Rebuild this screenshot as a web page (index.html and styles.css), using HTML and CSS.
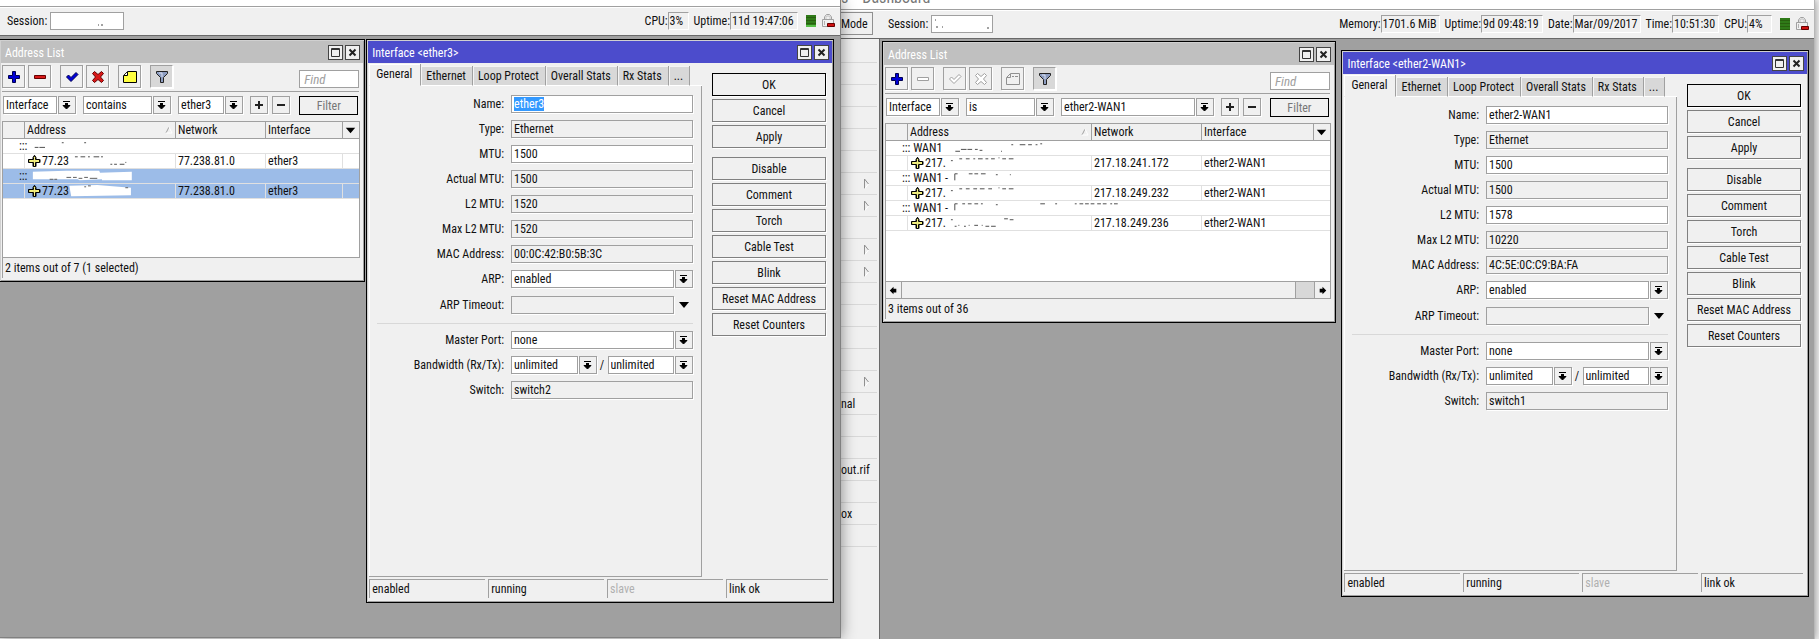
FILE: index.html
```html
<!DOCTYPE html>
<html lang="en">
<head>
<meta charset="utf-8">
<title>WinBox</title>
<link rel="stylesheet" href="styles.css">
</head>
<body>
<svg class="defs" aria-hidden="true">
  <symbol id="drop" viewBox="0 0 16 16"><path d="M4 4.500h7M4 8.500h7L7.500 12z" stroke="#000"/><path d="M6 6h3v3H6z"/></symbol>
  <symbol id="caret" viewBox="0 0 16 16"><path d="M3 5h10L8 11z"/></symbol>
  <symbol id="plus" viewBox="0 0 16 16"><path d="M6.500 2.500h3v4h4v3h-4v4h-3v-4h-4v-3h4z" fill="#0000d8" stroke="#000050"/></symbol>
  <symbol id="minus" viewBox="0 0 16 16"><path d="M2.500 6.500h11v3h-11z" fill="#d81818" stroke="#600"/></symbol>
  <symbol id="check" viewBox="0 0 16 16"><path d="M2.500 8l2-2L7 8.500l5-5 2 2L7 12.500z" fill="#0000d8" stroke="#000050"/></symbol>
  <symbol id="cross" viewBox="0 0 16 16"><path d="M2.500 4.500l2-2L8 5.500l3.500-3 2 2L10.500 8l3 3.500-2 2L8 10.500l-3.500 3-2-2L5.500 8z" fill="#d81818" stroke="#600"/></symbol>
  <symbol id="note" viewBox="0 0 16 16"><path d="M1.500 13.500v-7l4-4h9v11z" fill="#ffff40" stroke="#000"/><path d="M2 6.500h3.500V3" fill="#fff" stroke="#000"/></symbol>
  <symbol id="minus-off" viewBox="0 0 16 16"><path d="M2.500 6.500h11v3h-11z" fill="#fff" stroke="#a0a0a0"/></symbol>
  <symbol id="check-off" viewBox="0 0 16 16"><path d="M2.500 8l2-2L7 8.500l5-5 2 2L7 12.500z" fill="#fff" stroke="#a0a0a0"/></symbol>
  <symbol id="cross-off" viewBox="0 0 16 16"><path d="M2.500 4.500l2-2L8 5.500l3.500-3 2 2L10.500 8l3 3.500-2 2L8 10.500l-3.500 3-2-2L5.500 8z" fill="#fff" stroke="#a0a0a0"/></symbol>
  <symbol id="note-off" viewBox="0 0 16 16"><path d="M1.500 13.500v-7l4-4h9v11zM2 6.500h3.500V3M7 5.500h2M10 5.500h3" fill="none" stroke="#909090"/></symbol>
  <symbol id="funnel" viewBox="0 0 16 16"><path d="M2.500 2.500h11v2L9.500 8.500v5h-3v-5l-4-4z" fill="#8c9cc0" stroke="#222"/><path d="M5 4h3v4" fill="none" stroke="#dde4f4"/></symbol>
  <symbol id="add" viewBox="0 0 16 16"><path d="M7 4h2v3h3v2H9v3H7V9H4V7h3z" fill="#222"/></symbol>
  <symbol id="sub" viewBox="0 0 16 16"><path d="M4 7h8v2H4z" fill="#222"/></symbol>
  <symbol id="max" viewBox="0 0 13 13"><path d="M2.500 2.500h8v8h-8zM2 3.500h9" fill="none" stroke="#333"/></symbol>
  <symbol id="close" viewBox="0 0 13 13"><path d="M3.500 3.500l6 6M9.500 3.500l-6 6" stroke="#222" stroke-width="2"/></symbol>
  <symbol id="sort" viewBox="0 0 8 8"><path d="M1 7L4 1" stroke="#a0a0a0"/><path d="M4 1L7 7H1" fill="none" stroke="#fff"/></symbol>
  <symbol id="address" viewBox="0 0 13 12"><path d="M4.500 11.500v-4h-4v-3h4v-2l1.500-2h1l1.500 2v2h4v3h-4v4z" fill="#000"/><path d="M5.500 10.500v-4h-4v-1h4v-3l1-1 1 1v3h4v1h-4v4z" fill="#f4f080" stroke="#f4f080"/><path d="M5.500 11.500v-4h-5v-3h5v-2l1-2 1 2v2h4v3h-4v4z" fill="none" stroke="#000"/></symbol>
  <symbol id="left" viewBox="0 0 16 16"><path d="M4 8l4-4v2h3v4H8v2z"/></symbol>
  <symbol id="right" viewBox="0 0 16 16"><path d="M12 8L8 4v2H5v4h3v2z"/></symbol>
  <symbol id="expand" viewBox="0 0 7 12"><path d="M1.500 11V1l4 5" fill="none" stroke="#909090"/><path d="M5.500 6l-4 5" stroke="#fff"/></symbol>
  <symbol id="lock" viewBox="0 0 14 15"><path d="M3.500 7V4l2-2.500h3l2 2.500v3M1.500 6.500h11v7h-11z" fill="none" stroke="#a0a0a0"/><path d="M5 6V4.500L6 3h2l1 1.500V6" fill="none" stroke="#c4c4c4"/><path d="M3 9h1M3 11h1" stroke="#777"/><path d="M6.500 10.500h7v3h-7z" fill="#d01010" stroke="#600"/></symbol>
</svg>

<main class="desktop">
  <section class="app app-front" aria-label="First router">
    <header class="caption"></header>
    <div class="session-bar">
      <label for="s1">Session:</label>
      <span class="session wide"><input id="s1"><svg viewBox="0 0 74 18"><path d="M48 13h1M51 13h2" stroke="#444"/></svg></span>
      <div class="stats">
        <span class="stat">CPU:<output class="w-s">3%</output></span>
        <span class="stat">Uptime:<output class="w-l">11d 19:47:06</output></span>
        <i class="meter light"></i>
        <svg class="lock"><use href="#lock"/></svg>
      </div>
    </div>
    <div class="mdi">
      <section class="window list-a">
        <h2 class="title idle">Address List<span class="title-buttons"><button aria-label="Maximize"><svg><use href="#max"/></svg></button><button aria-label="Close"><svg><use href="#close"/></svg></button></span></h2>
        <div class="tools">
          <div class="group"><button class="tool" aria-label="Add"><svg><use href="#plus"/></svg></button><button class="tool" aria-label="Remove"><svg><use href="#minus"/></svg></button></div>
          <div class="group"><button class="tool" aria-label="Enable"><svg><use href="#check"/></svg></button><button class="tool" aria-label="Disable"><svg><use href="#cross"/></svg></button></div>
          <button class="tool" aria-label="Comment"><svg><use href="#note"/></svg></button>
          <button class="tool pressed" aria-label="Filter"><svg><use href="#funnel"/></svg></button>
          <input class="find" placeholder="Find" aria-label="Find">
        </div>
        <div class="filters">
          <div class="combo f-field"><select aria-label="Field"><option>Interface</option></select><button class="drop" aria-label="Open"><svg><use href="#drop"/></svg></button></div>
          <div class="combo f-op"><select aria-label="Operator"><option>contains</option></select><button class="drop" aria-label="Open"><svg><use href="#drop"/></svg></button></div>
          <div class="combo f-value"><select aria-label="Value"><option>ether3</option></select><button class="drop" aria-label="Open"><svg><use href="#drop"/></svg></button></div>
          <div class="pair"><button class="drop" aria-label="Add condition"><svg><use href="#add"/></svg></button><button class="drop" aria-label="Remove condition"><svg><use href="#sub"/></svg></button></div>
          <button class="apply-filter">Filter</button>
        </div>
        <div class="grid-box">
          <table>
            <colgroup><col class="c-flag"><col class="c-addr"><col class="c-net"><col><col class="c-menu"></colgroup>
            <thead><tr><th></th><th><span class="sorted">Address<svg><use href="#sort"/></svg></span></th><th>Network</th><th>Interface</th><th class="menu"><svg><use href="#caret"/></svg></th></tr></thead>
            <tbody>
              <tr class="note"><td colspan="5">:::<svg class="smudge" viewBox="0 0 120 15"><path d="M4 9h4M9 9h6M33 4h2M57 4h2" stroke="#444"/></svg></td></tr>
              <tr><td></td><td><svg class="pin"><use href="#address"/></svg>77.23<svg class="smudge over" viewBox="0 0 100 15"><path d="M0 5q20 -5 60 0v9H2z" fill="#fff"/><path d="M6 3h3M12 3h5M20 3h2M26 3h6M34 3h2M44 11h2M48 11h3M54 11h5M60 9h1" stroke="#444"/></svg></td><td>77.238.81.0</td><td>ether3</td><td></td></tr>
              <tr class="note selected"><td colspan="5">:::<svg class="smudge" viewBox="0 0 120 15"><path d="M2 3l36-1 35 0 1 2 34-1v9H76v-1l-24 1-2-1H2z" fill="#fff"/><path d="M20 11h4M25 11h3M38 9h5M45 9h4M51 10h4M57 9h4M63 10h8" stroke="#555"/></svg></td></tr>
              <tr class="selected"><td></td><td><svg class="pin"><use href="#address"/></svg>77.23<svg class="smudge over" viewBox="0 0 100 15"><path d="M0 2l30-1 36 3v8L2 13z" fill="#fff"/><path d="M16 3h2M20 2h3M60 4h3" stroke="#555"/></svg></td><td>77.238.81.0</td><td>ether3</td><td></td></tr>
            </tbody>
          </table>
        </div>
        <p class="count">2 items out of 7 (1 selected)</p>
      </section>

      <section class="window dialog-a">
        <h2 class="title">Interface &lt;ether3&gt;<span class="title-buttons"><button aria-label="Maximize"><svg><use href="#max"/></svg></button><button aria-label="Close"><svg><use href="#close"/></svg></button></span></h2>
        <div class="dialog-body">
          <div class="sheet">
            <nav class="tabs"><button class="current">General</button><button>Ethernet</button><button>Loop Protect</button><button>Overall Stats</button><button>Rx Stats</button><button>...</button><i></i></nav>
            <form class="panel">
              <label for="a1">Name:</label><input id="a1" class="marked" value="ether3">
              <label for="a2">Type:</label><input id="a2" readonly value="Ethernet">
              <label for="a3">MTU:</label><input id="a3" value="1500">
              <label for="a4">Actual MTU:</label><input id="a4" readonly value="1500">
              <label for="a5">L2 MTU:</label><input id="a5" readonly value="1520">
              <label for="a6">Max L2 MTU:</label><input id="a6" readonly value="1520">
              <label for="a7">MAC Address:</label><input id="a7" readonly value="00:0C:42:B0:5B:3C">
              <label for="a8">ARP:</label><div class="combo"><select id="a8"><option>enabled</option></select><button type="button" class="drop" aria-label="Open"><svg><use href="#drop"/></svg></button></div>
              <label for="a9">ARP Timeout:</label><div class="combo optional"><input id="a9" readonly><button type="button" class="drop bare" aria-label="Expand"><svg><use href="#caret"/></svg></button></div>
              <hr>
              <label for="a10">Master Port:</label><div class="combo"><select id="a10"><option>none</option></select><button type="button" class="drop" aria-label="Open"><svg><use href="#drop"/></svg></button></div>
              <label for="a11">Bandwidth (Rx/Tx):</label><div class="combo"><select id="a11"><option>unlimited</option></select><button type="button" class="drop" aria-label="Open"><svg><use href="#drop"/></svg></button><span class="slash">/</span><select aria-label="Tx"><option>unlimited</option></select><button type="button" class="drop" aria-label="Open"><svg><use href="#drop"/></svg></button></div>
              <label for="a12">Switch:</label><input id="a12" readonly value="switch2">
            </form>
          </div>
          <div class="actions"><button class="default">OK</button><button>Cancel</button><button>Apply</button><button class="spaced">Disable</button><button>Comment</button><button>Torch</button><button>Cable Test</button><button>Blink</button><button>Reset MAC Address</button><button>Reset Counters</button></div>
        </div>
        <footer class="status"><span>enabled</span><span>running</span><span class="off">slave</span><span>link ok</span></footer>
      </section>
    </div>
  </section>

  <section class="app app-back" aria-label="Second router">
    <header class="caption"><span>s</span><span>Dashboard</span></header>
    <div class="session-bar">
      <button class="mode">Mode</button>
      <label for="s2">Session:</label>
      <span class="session"><input id="s2"><svg viewBox="0 0 74 18"><path d="M4 5h1M5 12h2M11 12h1M56 13h2" stroke="#444"/></svg></span>
      <div class="stats">
        <span class="stat">Memory:<output class="w-m">1701.6 MiB</output></span>
        <span class="stat">Uptime:<output class="w-n">9d 09:48:19</output></span>
        <span class="stat">Date:<output class="w-l">Mar/09/2017</output></span>
        <span class="stat">Time:<output class="w-t">10:51:30</output></span>
        <span class="stat">CPU:<output class="w-c">4%</output></span>
        <i class="meter"></i>
        <svg class="lock"><use href="#lock"/></svg>
      </div>
    </div>
    <div class="workspace">
      <ul class="side-menu">
        <li></li><li></li><li></li><li></li><li></li><li></li>
        <li><svg><use href="#expand"/></svg></li><li><svg><use href="#expand"/></svg></li><li></li><li><svg><use href="#expand"/></svg></li><li><svg><use href="#expand"/></svg></li>
        <li></li><li></li><li></li><li></li><li><svg><use href="#expand"/></svg></li>
        <li>nal</li><li></li><li></li><li>out.rif</li><li></li><li>ox</li><li></li>
      </ul>
      <div class="mdi">
        <section class="window list-b">
          <h2 class="title idle">Address List<span class="title-buttons"><button aria-label="Maximize"><svg><use href="#max"/></svg></button><button aria-label="Close"><svg><use href="#close"/></svg></button></span></h2>
          <div class="tools">
            <div class="group"><button class="tool" aria-label="Add"><svg><use href="#plus"/></svg></button><button class="tool" aria-label="Remove" disabled><svg><use href="#minus-off"/></svg></button></div>
            <div class="group"><button class="tool" aria-label="Enable" disabled><svg><use href="#check-off"/></svg></button><button class="tool" aria-label="Disable" disabled><svg><use href="#cross-off"/></svg></button></div>
            <button class="tool" aria-label="Comment" disabled><svg><use href="#note-off"/></svg></button>
            <button class="tool pressed" aria-label="Filter"><svg><use href="#funnel"/></svg></button>
            <input class="find" placeholder="Find" aria-label="Find">
          </div>
          <div class="filters">
            <div class="combo f-field"><select aria-label="Field"><option>Interface</option></select><button class="drop" aria-label="Open"><svg><use href="#drop"/></svg></button></div>
            <div class="combo f-op"><select aria-label="Operator"><option>is</option></select><button class="drop" aria-label="Open"><svg><use href="#drop"/></svg></button></div>
            <div class="combo f-value"><select aria-label="Value"><option>ether2-WAN1</option></select><button class="drop" aria-label="Open"><svg><use href="#drop"/></svg></button></div>
            <div class="pair"><button class="drop" aria-label="Add condition"><svg><use href="#add"/></svg></button><button class="drop" aria-label="Remove condition"><svg><use href="#sub"/></svg></button></div>
            <button class="apply-filter">Filter</button>
          </div>
          <div class="grid-box">
            <table>
              <colgroup><col class="c-flag"><col class="c-addr-w"><col class="c-net-w"><col><col class="c-menu"></colgroup>
              <thead><tr><th></th><th><span class="sorted">Address<svg><use href="#sort"/></svg></span></th><th>Network</th><th>Interface</th><th class="menu"><svg><use href="#caret"/></svg></th></tr></thead>
              <tbody>
                <tr class="note"><td colspan="5">::: WAN1<svg class="smudge" viewBox="0 0 120 15"><path d="M10 11h5M16 9h6M23 9h5M31 9h3M36 10h3M59 11h1M70 4h2M79 4h6M88 4h4M96 4h2M101 3h2" stroke="#444"/></svg></td></tr>
                <tr><td></td><td><svg class="pin"><use href="#address"/></svg>217.<svg class="smudge" viewBox="0 0 120 15"><path d="M1 5h2M10 3h3M17 3h4M25 3h2M30 3h5M38 3h3M44 3h4M52 2h1M56 3h4M63 3h5" stroke="#444"/></svg></td><td>217.18.241.172</td><td colspan="2">ether2-WAN1</td></tr>
                <tr class="note"><td colspan="5">::: WAN1 -<svg class="smudge" viewBox="0 0 120 15"><path d="M3 10V3h3M18 3h4M24 3h4M31 3h5M47 4h2M62 4h1" fill="none" stroke="#444"/></svg></td></tr>
                <tr><td></td><td><svg class="pin"><use href="#address"/></svg>217.<svg class="smudge" viewBox="0 0 120 15"><path d="M1 5h2M10 3h3M17 3h4M25 3h4M32 3h5M41 3h4M52 2h1M56 3h4M63 3h5" stroke="#444"/></svg></td><td>217.18.249.232</td><td colspan="2">ether2-WAN1</td></tr>
                <tr class="note"><td colspan="5">::: WAN1 -<svg class="smudge" viewBox="0 0 120 15"><path d="M3 10V3h3" fill="none" stroke="#444"/><path d="M11 3h3M17 3h4M24 3h4M31 3h2M47 4h2" stroke="#444"/></svg><svg class="smudge" viewBox="0 0 120 15"><path d="M-36 0" /><path d="M-34 3h5M-18 3h2M3 3h2M8 3h4M14 3h4M20 3h4M27 3h4M33 3h4M41 3h2M45 3h4" transform="translate(0 0)" stroke="#444"/></svg></td></tr>
                <tr><td></td><td><svg class="pin"><use href="#address"/></svg>217.<svg class="smudge" viewBox="0 0 120 15"><path d="M1 4h2M5 11h2M9 10h1M15 11h2M20 10h1M26 10h4M34 10h1M38 11h4M44 11h5M58 3h4M64 4h4" stroke="#444"/></svg></td><td>217.18.249.236</td><td colspan="2">ether2-WAN1</td></tr>
              </tbody>
            </table>
            <div class="scroll"><button aria-label="Scroll left"><svg><use href="#left"/></svg></button><i class="thumb"></i><i class="track"></i><button aria-label="Scroll right"><svg><use href="#right"/></svg></button></div>
          </div>
          <p class="count">3 items out of 36</p>
        </section>

        <section class="window dialog-b">
          <h2 class="title">Interface &lt;ether2-WAN1&gt;<span class="title-buttons"><button aria-label="Maximize"><svg><use href="#max"/></svg></button><button aria-label="Close"><svg><use href="#close"/></svg></button></span></h2>
          <div class="dialog-body">
            <div class="sheet">
              <nav class="tabs"><button class="current">General</button><button>Ethernet</button><button>Loop Protect</button><button>Overall Stats</button><button>Rx Stats</button><button>...</button><i></i></nav>
              <form class="panel">
                <label for="b1">Name:</label><input id="b1" value="ether2-WAN1">
                <label for="b2">Type:</label><input id="b2" readonly value="Ethernet">
                <label for="b3">MTU:</label><input id="b3" value="1500">
                <label for="b4">Actual MTU:</label><input id="b4" readonly value="1500">
                <label for="b5">L2 MTU:</label><input id="b5" value="1578">
                <label for="b6">Max L2 MTU:</label><input id="b6" readonly value="10220">
                <label for="b7">MAC Address:</label><input id="b7" readonly value="4C:5E:0C:C9:BA:FA">
                <label for="b8">ARP:</label><div class="combo"><select id="b8"><option>enabled</option></select><button type="button" class="drop" aria-label="Open"><svg><use href="#drop"/></svg></button></div>
                <label for="b9">ARP Timeout:</label><div class="combo optional"><input id="b9" readonly><button type="button" class="drop bare" aria-label="Expand"><svg><use href="#caret"/></svg></button></div>
                <hr>
                <label for="b10">Master Port:</label><div class="combo"><select id="b10"><option>none</option></select><button type="button" class="drop" aria-label="Open"><svg><use href="#drop"/></svg></button></div>
                <label for="b11">Bandwidth (Rx/Tx):</label><div class="combo"><select id="b11"><option>unlimited</option></select><button type="button" class="drop" aria-label="Open"><svg><use href="#drop"/></svg></button><span class="slash">/</span><select aria-label="Tx"><option>unlimited</option></select><button type="button" class="drop" aria-label="Open"><svg><use href="#drop"/></svg></button></div>
                <label for="b12">Switch:</label><input id="b12" readonly value="switch1">
              </form>
            </div>
            <div class="actions"><button class="default">OK</button><button>Cancel</button><button>Apply</button><button class="spaced">Disable</button><button>Comment</button><button>Torch</button><button>Cable Test</button><button>Blink</button><button>Reset MAC Address</button><button>Reset Counters</button></div>
          </div>
          <footer class="status"><span>enabled</span><span>running</span><span class="off">slave</span><span>link ok</span></footer>
        </section>
      </div>
    </div>
  </section>
</main>
</body>
</html>
```
FILE: styles.css
```css
* { box-sizing: border-box; }

body {
  margin: 0;
  background: #f0f0f0;
  color: #111;
  font: 12px/14px "Roboto Condensed", Roboto, "Liberation Sans", sans-serif;
}

button, input, select {
  margin: 0;
  padding: 0;
  border: 1px solid #a0a0a0;
  border-radius: 0;
  background: #f0f0f0;
  color: inherit;
  font: inherit;
  outline: 0;
}

svg { display: block; flex: none; }
.defs { position: absolute; width: 0; height: 0; }

/* Two overlapping application frames */
.desktop {
  display: grid;
  grid-template-columns: 841fr 974fr 4px;
  height: 100vh;
  overflow: hidden;
}
.app { display: flex; flex-direction: column; min-width: 0; }
.app-front {
  z-index: 1;
  margin-bottom: 1px;
  border: solid #808080;
  border-width: 0 1px 1px 0;
  box-shadow: 0 0 14px rgba(0, 0, 0, .45);
}
.app-back { border-right: 1px solid #b8b8b8; box-shadow: 0 0 8px rgba(0, 0, 0, .4); }

.caption {
  display: flex;
  align-items: flex-end;
  gap: 14px;
  height: 7px;
  background: #fff;
  border-bottom: 1px solid #a0a0a0;
  color: #777;
  font-size: 16px;
  line-height: 16px;
  overflow: hidden;
}
.app-back .caption { height: 10px; }
.app-back .caption span { margin-bottom: 3px; }

.session-bar {
  display: flex;
  align-items: center;
  height: 29px;
  padding: 0 5px 2px 7px;
  background: #f0f0f0;
  border-bottom: 1px solid #696969;
  border-top: 1px solid #fff;
}
.app-back .session-bar { padding-left: 0; }
.session { position: relative; width: 62px; margin-left: 3px; }
.session.wide { width: 74px; }
.session input { display: block; width: 100%; height: 18px; background: #fff; }
.session svg { position: absolute; top: 0; left: 0; width: 74px; height: 18px; pointer-events: none; }
.mode { width: 32px; height: 23px; margin-right: 15px; border-left: 0; border-color: #909090; text-align: left; }
.stats { display: flex; align-items: center; gap: 5px; margin-left: auto; }
.stat { display: flex; align-items: center; }
.stat output {
  height: 18px;
  padding-left: 1px;
  line-height: 16px;
  white-space: nowrap;
  border: 1px solid #a0a0a0;
  border-right-color: #fff;
  border-bottom-color: #fff;
}
.w-s { width: 21px; }
.w-c { width: 25px; }
.w-t { width: 47px; }
.w-m { width: 59px; }
.w-n { width: 62px; }
.w-l { width: 68px; }
.meter { width: 10px; height: 12px; margin-left: 3px; background: repeating-linear-gradient(#2f7a18 0 2px, #28600f 2px 3px); }
.meter.light { border-bottom: 2px solid #58c048; }
.lock { width: 14px; height: 15px; }

.workspace { display: flex; flex: 1; min-height: 0; }
.side-menu { width: 36px; margin: 2px 2px 0 0; padding: 0; list-style: none; }
.side-menu li {
  display: flex;
  align-items: center;
  height: 22px;
  padding-right: 7px;
  border-bottom: 1px solid #d8d8d8;
}
.side-menu svg { width: 7px; height: 12px; margin-left: auto; }

.mdi { position: relative; flex: 1; background: #a0a0a0; overflow: hidden; }
.workspace .mdi { border-left: 1px solid #696969; }

/* Child windows */
.window {
  position: absolute;
  display: flex;
  flex-direction: column;
  border: 1px solid #000;
  background: #f0f0f0;
  box-shadow: inset 1px 1px #d0d0d0, inset -1px -1px #a0a0a0;
}
.list-a { top: 3px; left: -1px; width: 43.6%; }
.dialog-a { top: 3px; bottom: 34px; left: 43.6%; right: 6px; }
.list-b { top: 2px; left: 2px; width: 48.6%; }
.dialog-b { top: 11px; bottom: 42px; left: 49.4%; right: 5px; }

.title {
  display: flex;
  align-items: center;
  height: 22px;
  margin: 1px 1px 0;
  padding: 2px 3px 0 4px;
  background: #4c4ccc;
  color: #fff;
  font: inherit;
}
.title.idle { background: #c0c0c0; }
.title-buttons { display: flex; gap: 2px; margin-left: auto; padding-bottom: 2px; }
.title-buttons button { width: 15px; height: 15px; border-color: #444; }
.title-buttons svg { width: 13px; height: 13px; }

.tools {
  display: flex;
  gap: 9px;
  margin: 2px 5px 0 2px;
  padding-bottom: 3px;
  border-bottom: 1px solid #a0a0a0;
}
.group { display: flex; gap: 3px; }
.tool {
  display: grid;
  place-items: center;
  width: 23px;
  height: 23px;
  box-shadow: 1px 1px #fff;
}
.tool svg { width: 16px; height: 16px; }
.tool.pressed { background: #d8d8d8; border-right-color: #fff; border-bottom-color: #fff; }
.find { width: 60px; height: 18px; margin: 5px 0 0 auto; padding-left: 4px; background: #fff; font-style: italic; font-size: 13px; }
.find::placeholder { color: #a0a0a0; opacity: 1; }

.filters { display: flex; gap: 7px; margin: 4px 6px 6px 3px; }
.combo { display: flex; gap: 1px; min-width: 0; }
.combo select, .combo input { flex: 1; min-width: 0; }
.f-field { width: 73px; }
.f-op { width: 88px; }
.f-value { flex: 1; }
select, .panel input {
  appearance: none;
  height: 18px;
  padding: 0 2px;
  background: #fff;
  box-shadow: 1px 1px #fff;
}
.drop { flex: none; display: grid; place-items: center; width: 18px; height: 18px; box-shadow: 1px 1px #fff; }
.drop svg { width: 16px; height: 16px; }
.drop.bare { border-color: transparent; box-shadow: none; }
.pair { display: flex; gap: 4px; margin-right: 2px; }
.apply-filter { width: 59px; height: 19px; border-color: #000; color: #777; }

.grid-box {
  display: flex;
  flex-direction: column;
  height: 137px;
  margin: 0 4px 0 2px;
  border: 1px solid #a0a0a0;
  background: #fff;
}
.list-b .grid-box { height: 176px; }
table { width: 100%; table-layout: fixed; border-collapse: separate; border-spacing: 0; }
.c-flag { width: 22px; }
.c-addr { width: 151px; }
.c-net { width: 90px; }
.c-addr-w { width: 184px; }
.c-net-w { width: 110px; }
.c-menu { width: 16px; }
th {
  height: 17px;
  padding: 0 2px;
  background: #f0f0f0;
  border: solid #a0a0a0;
  border-width: 0 1px 1px 0;
  font-weight: normal;
  text-align: left;
}
th:last-child { padding: 0; border-right: 0; }
th svg { width: 15px; height: 15px; }
.sorted { display: flex; align-items: center; justify-content: space-between; }
.sorted svg { width: 8px; height: 8px; }
td {
  height: 15px;
  padding: 0 2px;
  line-height: 14px;
  white-space: nowrap;
  overflow: hidden;
  border: solid #e0e0e0;
  border-width: 0 1px 1px 0;
}
td:last-child { border-right: 0; }
.note td { padding-left: 16px; }
.selected td { background: #9cbce8; }
td svg { display: inline-block; vertical-align: top; }
.pin { width: 13px; height: 12px; margin: 1px 1px 0; }
.smudge { width: 120px; height: 14px; overflow: visible; }
.smudge.over { width: 100px; margin-left: -3px; }

.scroll { display: flex; height: 17px; margin-top: auto; border-top: 1px solid #a0a0a0; }
.scroll button { width: 16px; border-width: 0 1px 0 0; }
.scroll button:last-child { border-width: 0 0 0 1px; }
.scroll svg { width: 15px; height: 15px; }
.thumb { flex: 1; background: #f0f0f0; border-right: 1px solid #a0a0a0; }
.track { width: 18px; background: #d8d8d8; }

.count { margin: 0 2px 3px; padding: 3px 2px 3px; border-left: 1px solid #a0a0a0; }

/* Interface dialog */
.dialog-body { display: flex; flex: 1; gap: 10px; min-height: 0; padding: 1px 7px 0 2px; }
.sheet { display: flex; flex-direction: column; flex: 1; min-width: 0; }
.tabs { display: flex; align-items: flex-end; height: 22px; }
.tabs button {
  height: 20px;
  padding: 1px 6px 0 5px;
  background: #d8d8d8;
  border-width: 0 1px 1px 0;
  border-color: #a0a0a0;
  border-bottom-color: #fff;
  box-shadow: inset 1px 1px #f4f4f4;
  white-space: nowrap;
}
.tabs button.current {
  height: 22px;
  padding: 0 8px 2px 7px;
  background: #f0f0f0;
  border-bottom-color: #f0f0f0;
  box-shadow: inset 1px 1px #fff;
}
.tabs i { flex: 1; border-bottom: 1px solid #fff; }
.panel {
  display: grid;
  grid-template-columns: 1fr 182px;
  gap: 7px;
  align-content: start;
  align-items: center;
  flex: 1;
  padding: 9px 8px 0;
  border: solid #a0a0a0;
  border-width: 0 1px 1px 0;
  box-shadow: inset 1px 0 #fff;
}
.panel label { text-align: right; }
.panel input[readonly] { background: #f0f0f0; }
.panel input.marked {
  color: #fff;
  background: linear-gradient(#3399ff, #3399ff) 2px 1px / 30px 14px no-repeat #fff;
}
.panel .optional { margin-top: 1px; }
.panel hr { grid-column: 1 / -1; width: 100%; height: 1px; margin: 2px 0 0; border: 0; background: #d8d8d8; }
.slash { width: 9px; text-align: center; line-height: 18px; }

.actions { display: flex; flex-direction: column; gap: 3px; width: 114px; padding-top: 9px; }
.actions button { height: 23px; border-color: #808080; box-shadow: 1px 1px #fff; }
.actions .default { border-color: #000; }
.actions .spaced { margin-top: 6px; }

.status { display: grid; grid-template-columns: 116fr 116fr 116fr 102fr; gap: 3px; padding: 2px 5px 4px 2px; }
.status span { height: 19px; padding: 2px; border: solid #a0a0a0; border-width: 1px 0 0 1px; }
.status .off { color: #b0b0b0; }
```
